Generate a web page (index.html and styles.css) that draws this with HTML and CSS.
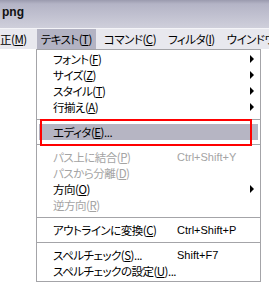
FILE: index.html
```html
<!DOCTYPE html>
<html lang="ja">
<head>
    <meta charset="UTF-8">
    <title>png</title>
    <link rel="stylesheet" href="styles.css">
</head>
<body>
    <div class="titlebar">png</div>

    <div class="menubar">
        <span class="menu first">正(<u>M</u>)</span>
        <span class="menu open">テキスト(<u>T</u>)</span>
        <span class="menu">コマンド(<u>C</u>)</span>
        <span class="menu">フィルタ(<u>I</u>)</span>
        <span class="menu">ウインドウ</span>
    </div>

    <div class="workspace"></div>

    <!-- dropdown of the text menu -->
    <div class="dropdown">
        <div class="item"><span class="label">フォント(<u>F</u>)</span><span class="key"></span><span class="arrow"></span></div>
        <div class="item"><span class="label">サイズ(<u>Z</u>)</span><span class="key"></span><span class="arrow"></span></div>
        <div class="item"><span class="label">スタイル(<u>T</u>)</span><span class="key"></span><span class="arrow"></span></div>
        <div class="item"><span class="label">行揃え(<u>A</u>)</span><span class="key"></span><span class="arrow"></span></div>
        <div class="sep"></div>
        <div class="item active"><span class="label">エディタ(<u>E</u>)...</span><span class="key"></span></div>
        <div class="sep"></div>
        <div class="item disabled"><span class="label">パス上に結合(<u>P</u>)</span><span class="key">Ctrl+Shift+Y</span></div>
        <div class="item disabled"><span class="label">パスから分離(<u>D</u>)</span><span class="key"></span></div>
        <div class="item"><span class="label">方向(<u>O</u>)</span><span class="key"></span><span class="arrow"></span></div>
        <div class="item disabled"><span class="label">逆方向(<u>R</u>)</span><span class="key"></span></div>
        <div class="sep"></div>
        <div class="item"><span class="label">アウトラインに変換(<u>C</u>)</span><span class="key">Ctrl+Shift+P</span></div>
        <div class="sep"></div>
        <div class="item"><span class="label">スペルチェック(<u>S</u>)...</span><span class="key">Shift+F7</span></div>
        <div class="item"><span class="label">スペルチェックの設定(<u>U</u>)...</span><span class="key"></span></div>
    </div>

    <!-- red annotation frame -->
    <div class="mark"></div>
</body>
</html>
```

FILE: styles.css
```css
* {
    margin: 0;
    padding: 0;
    box-sizing: border-box;
}

body {
    width: 269px;
    height: 283px;
    overflow: hidden;
    position: relative;
    background: white;
    font-family: "Noto Sans CJK JP", sans-serif;
    font-size: 11.5px;
    letter-spacing: -0.5px;
    font-feature-settings: "palt" 1;
    color: #000;
}

u {
    text-decoration: underline;
    text-underline-offset: 1px;
}

.titlebar {
    height: 28px;
    padding: 5px 0 0 2px;
    background: linear-gradient(#9a9aae 0, #b4b4c6 4px, #cfcfdb 100%);
    font-family: "Liberation Sans", sans-serif;
    font-weight: bold;
    font-size: 12px;
    letter-spacing: 0;
    color: #111;
}

.menubar {
    height: 21px;
    display: flex;
    align-items: stretch;
    border-top: 1px solid #f4f4f8;
    background: #e8e8ee;
    white-space: nowrap;
    overflow: hidden;
}

.menu {
    display: flex;
    align-items: center;
    padding: 0 4px;
    margin-right: 4px;
}

.menu.first {
    padding-left: 0;
    margin-right: 6px;
}

.menu.open {
    background: #b3b3c3;
}

.workspace {
    height: 234px;
    background: white;
}

.dropdown {
    position: absolute;
    left: 36px;
    top: 49px;
    width: 225px;
    height: 233px;
    padding-top: 1px;
    background: white;
    border: 1px solid #a4a4a8;
}

.item {
    display: flex;
    align-items: center;
    height: 16px;
    margin: 0 2px;
    padding-left: 14px;
    white-space: nowrap;
}

.label {
    width: 124px;
}

.key {
    flex: 1;
    font-family: "Liberation Sans", sans-serif;
    font-size: 11px;
    letter-spacing: 0;
    font-feature-settings: normal;
}

.arrow {
    width: 0;
    height: 0;
    margin-right: 4px;
    border-style: solid;
    border-width: 4px 0 4px 4px;
    border-color: transparent transparent transparent #000;
}

.item.active {
    background: #b6b5c3;
}

.item.disabled {
    color: #a4a4a4;
}

.sep {
    height: 9px;
    padding-top: 4px;
}

.sep::before {
    content: "";
    display: block;
    height: 1px;
    background: #a4a4a8;
}

.mark {
    position: absolute;
    left: 40px;
    top: 119px;
    width: 212px;
    height: 27px;
    border: 2px solid #f00;
}
```
